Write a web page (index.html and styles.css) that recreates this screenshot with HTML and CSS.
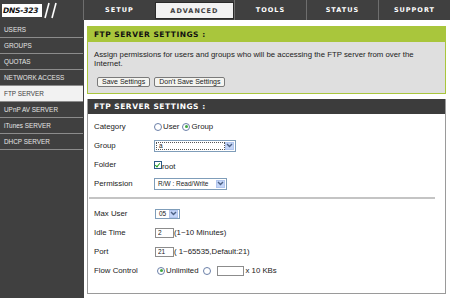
FILE: index.html
```html
<!DOCTYPE html>
<html lang="en">
<head>
  <meta charset="UTF-8" />
  <title>DNS-323 - FTP Server</title>
  <link rel="stylesheet" href="styles.css">
</head>
<body>
  <!-- Top bar -->
  <div class="topbar">
    <div class="logo">
      <span class="logo-box">DNS-323</span>
      <svg class="slashes" width="14" height="17" viewBox="0 0 14 17">
        <line x1="5" y1="1" x2="1" y2="16" stroke="#fff" stroke-width="1.6" />
        <line x1="12" y1="1" x2="8" y2="16" stroke="#fff" stroke-width="1.6" />
      </svg>
    </div>
    <div class="tab">SETUP</div>
    <div class="tab active">ADVANCED</div>
    <div class="tab">TOOLS</div>
    <div class="tab">STATUS</div>
    <div class="tab">SUPPORT</div>
  </div>

  <div class="container">
    <!-- Sidebar -->
    <div class="sidebar">
      <div class="menu-item">USERS</div>
      <div class="menu-item">GROUPS</div>
      <div class="menu-item">QUOTAS</div>
      <div class="menu-item">NETWORK ACCESS</div>
      <div class="menu-item active">FTP SERVER</div>
      <div class="menu-item">UPnP AV SERVER</div>
      <div class="menu-item">iTunes SERVER</div>
      <div class="menu-item">DHCP SERVER</div>
    </div>

    <!-- Main -->
    <div class="main">
      <div class="box intro">
        <div class="box-title">FTP SERVER SETTINGS :</div>
        <div class="box-body">
          <p>Assign permissions for users and groups who will be accessing the FTP server from over the Internet.</p>
          <div class="buttons">
            <button type="button">Save Settings</button>
            <button type="button">Don't Save Settings</button>
          </div>
        </div>
      </div>

      <div class="box settings">
        <div class="box-title">FTP SERVER SETTINGS :</div>
        <div class="box-body">
          <div class="row">
            <div class="label">Category</div>
            <label class="opt"><input type="radio" name="cat" /> User</label>
            <label class="opt"><input type="radio" name="cat" checked /> Group</label>
          </div>
          <div class="row">
            <div class="label">Group</div>
            <div class="select group-select">
              <span class="value focus">a</span>
              <span class="drop"><svg width="7" height="5" viewBox="0 0 7 5"><path d="M1 1 L3.5 3.5 L6 1" fill="none" stroke="#4d6185" stroke-width="1.4" /></svg></span>
            </div>
          </div>
          <div class="row">
            <div class="label">Folder</div>
            <label class="check"><input type="checkbox" checked /><span class="root">root</span></label>
          </div>
          <div class="row">
            <div class="label">Permission</div>
            <div class="select perm-select">
              <span class="value">R/W : Read/Write</span>
              <span class="drop"><svg width="7" height="5" viewBox="0 0 7 5"><path d="M1 1 L3.5 3.5 L6 1" fill="none" stroke="#4d6185" stroke-width="1.4" /></svg></span>
            </div>
          </div>

          <hr />

          <div class="row">
            <div class="label">Max User</div>
            <div class="select user-select">
              <span class="value">05</span>
              <span class="drop"><svg width="7" height="5" viewBox="0 0 7 5"><path d="M1 1 L3.5 3.5 L6 1" fill="none" stroke="#4d6185" stroke-width="1.4" /></svg></span>
            </div>
          </div>
          <div class="row">
            <div class="label">Idle Time</div>
            <input class="field" type="text" value="2" />
            <span>(1~10 Minutes)</span>
          </div>
          <div class="row">
            <div class="label">Port</div>
            <input class="field" type="text" value="21" />
            <span>( 1~65535,Default:21)</span>
          </div>
          <div class="row">
            <div class="label">Flow Control</div>
            <label class="opt flow"><input type="radio" name="flow" checked />Unlimited</label>
            <label class="opt"><input type="radio" name="flow" /></label>
            <input class="field wide" type="text" value="" />
            <span class="unit">x 10 KBs</span>
          </div>
        </div>
      </div>
    </div>
  </div>
</body>
</html>
```

FILE: styles.css
```css
* {
  box-sizing: border-box;
}

body {
  margin: 0;
  background-color: #fff;
  font-family: "Liberation Sans", Arial, sans-serif;
  font-size: 7.8px;
  color: #222;
  height: 298px;
  overflow: hidden;
}

/* ===== top bar ===== */
.topbar {
  display: flex;
  height: 20px;
  background-color: #404040;
}

.logo {
  width: 84px;
  display: flex;
  align-items: center;
  padding-left: 2px;
  gap: 2px;
}

.logo-box {
  background-color: #fff;
  color: #111;
  font-family: "DejaVu Sans", sans-serif;
  font-weight: bold;
  font-style: italic;
  font-size: 7.5px;
  height: 13px;
  line-height: 13px;
  width: 40px;
  padding-left: 1px;
  letter-spacing: -0.2px;
}

.tab {
  width: 73px;
  border-left: 1px solid #6e6e6e;
  color: #fff;
  font-family: "DejaVu Sans", sans-serif;
  font-weight: bold;
  font-size: 6.5px;
  letter-spacing: 1px;
  display: flex;
  align-items: center;
  justify-content: center;
}

.tab.active {
  width: 80px;
  background-color: #f2f2f2;
  color: #404040;
  margin: 2px 0 1px;
  border: 1px solid #2a2a2a;
}

/* ===== layout ===== */
.container {
  display: flex;
  height: 278px;
}

.sidebar {
  width: 84px;
  background-color: #404040;
  padding: 2px 1px 0 0;
  flex-shrink: 0;
}

.menu-item {
  height: 16px;
  line-height: 15px;
  padding-left: 4px;
  color: #e6e6e6;
  font-size: 6.4px;
  border-bottom: 1px solid #8c8c8c;
}

.menu-item.active {
  background-color: #f2f2f2;
  color: #404040;
}

.main {
  flex: 1;
  padding: 6px 4px 0 3px;
}

/* ===== boxes ===== */
.box-title {
  height: 15px;
  line-height: 15px;
  padding-left: 6px;
  font-family: "DejaVu Sans", sans-serif;
  font-weight: bold;
  font-size: 7.5px;
  letter-spacing: 0.5px;
}

.intro {
  border: 1px solid #a9c63c;
  margin-bottom: 5px;
}

.intro .box-title {
  background-color: #a9c63c;
  color: #111;
}

.intro .box-body {
  background-color: #dfdfdf;
  padding: 8px 6px 6px;
}

.intro p {
  margin: 0;
  line-height: 9px;
}

.buttons {
  display: flex;
  gap: 4px;
  margin-top: 9px;
  padding-left: 3px;
}

button {
  font-family: inherit;
  font-size: 7px;
  height: 10px;
  line-height: 8px;
  padding: 0 4px;
  background-color: #f4f4f0;
  border: 1px solid #7a7a7a;
  border-radius: 2px;
  color: #222;
}

.settings {
  border: 1px solid #9a9a9a;
  border-top: none;
  height: 195px;
}

.settings .box-title {
  background-color: #3c3c3c;
  color: #fff;
}

.settings .box-body {
  padding: 3px 6px 0;
}

.row {
  display: flex;
  align-items: center;
  height: 19px;
}

.label {
  width: 60px;
  flex-shrink: 0;
}

hr {
  border: none;
  border-top: 2px solid #c4c4c4;
  margin: 4px 4px 5px -5px;
}

/* ===== controls ===== */
.opt {
  display: flex;
  align-items: center;
  margin-right: 3px;
}

input[type="radio"] {
  appearance: none;
  width: 8px;
  height: 8px;
  margin: 0 1px 0 0;
  border: 1px solid #6b7fa8;
  border-radius: 50%;
  background-color: #fff;
  position: relative;
}

input[type="radio"]:checked::after {
  content: "";
  position: absolute;
  left: 1.5px;
  top: 1.5px;
  width: 3px;
  height: 3px;
  border-radius: 50%;
  background-color: #3fa83f;
}

.flow {
  margin-left: 3px;
  margin-right: 4px;
}

.check {
  display: flex;
  align-items: flex-end;
}

input[type="checkbox"] {
  appearance: none;
  width: 8px;
  height: 8px;
  margin: 0;
  border: 1px solid #2c5a86;
  background-color: #fff;
  position: relative;
}

input[type="checkbox"]:checked::after {
  content: "";
  position: absolute;
  left: 1px;
  top: 0;
  width: 2px;
  height: 4px;
  border: solid #21a121;
  border-width: 0 1.5px 1.5px 0;
  transform: rotate(40deg);
}

.root {
  position: relative;
  top: 2px;
}

.select {
  display: flex;
  align-items: center;
  height: 12px;
  border: 1px solid #7f9db9;
  background-color: #fff;
  padding: 1px;
}

.select .value {
  flex: 1;
  height: 8px;
  line-height: 8px;
  font-size: 6.5px;
  padding-left: 2px;
}

.select .value.focus {
  border: 1px dotted #555;
  line-height: 6px;
}

.select .drop {
  width: 9px;
  height: 8px;
  background-color: #c4d5f8;
  border: 1px solid #b2c6ee;
  display: flex;
  align-items: center;
  justify-content: center;
}

.group-select {
  width: 82px;
}

.perm-select {
  width: 73px;
}

.user-select {
  width: 25px;
  height: 10px;
  margin-left: 1px;
}

.field {
  width: 19px;
  height: 10px;
  margin: 0 0 0 1px;
  padding: 0 2px;
  border: 1px solid #8c8c8c;
  font-family: inherit;
  font-size: 6.5px;
  color: #222;
}

.field.wide {
  width: 27px;
  margin-left: 2px;
}

.unit {
  margin-left: 2px;
}
```
